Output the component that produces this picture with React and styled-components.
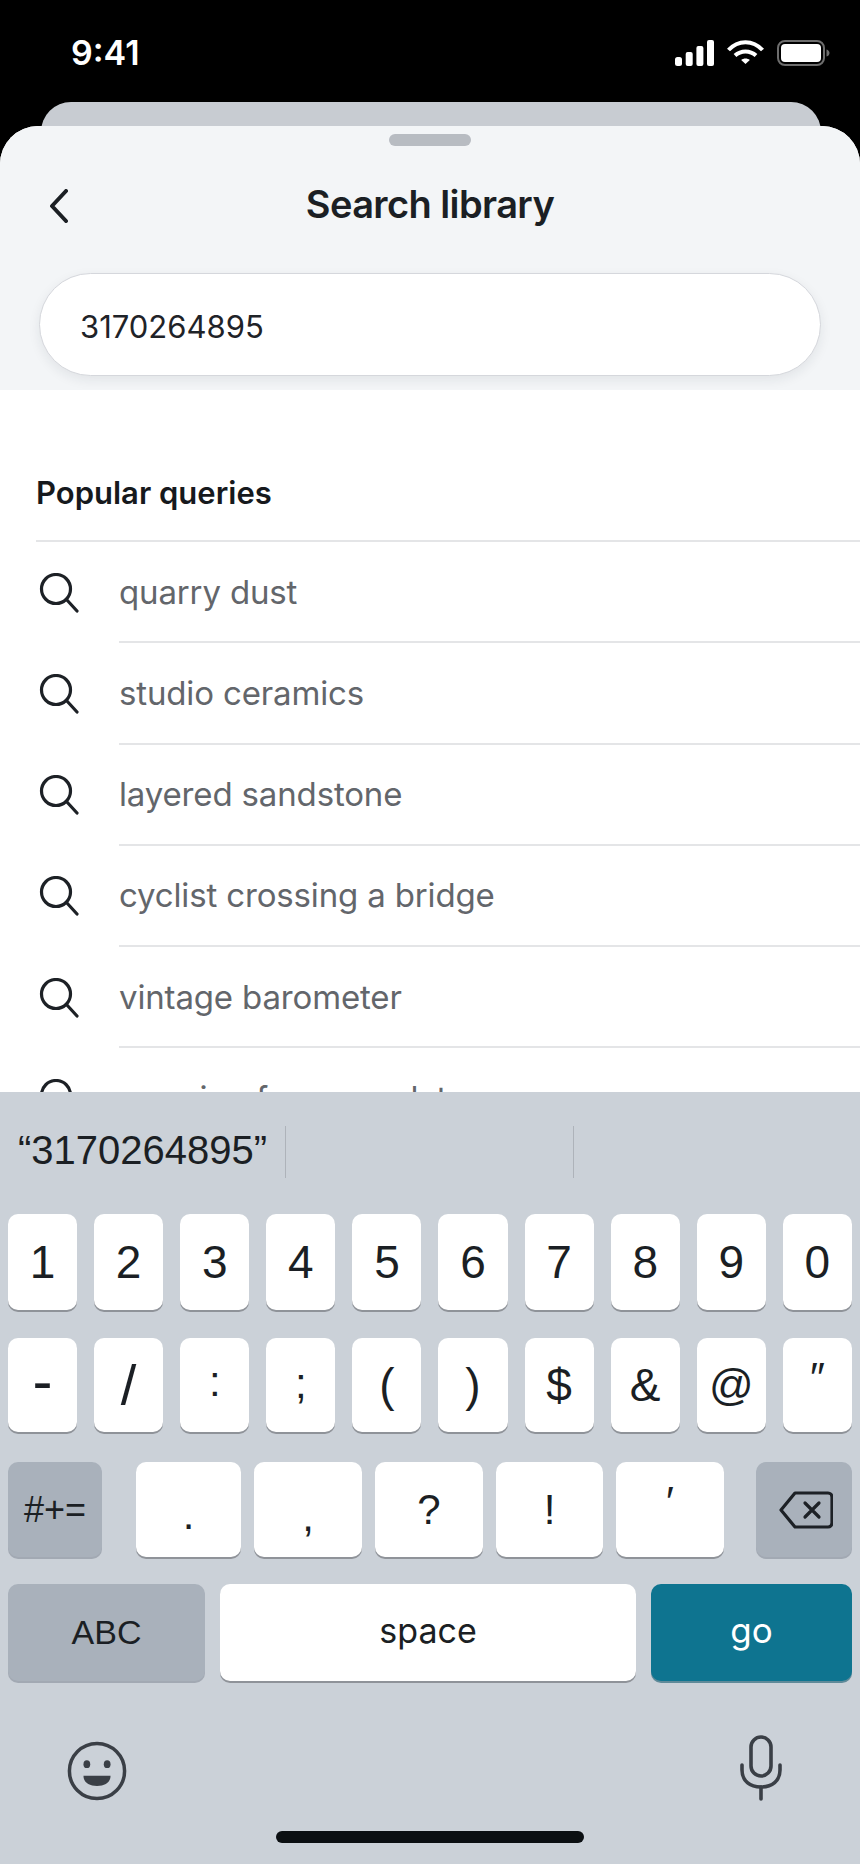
import React from "react";
import styled, { createGlobalStyle } from "styled-components";

/**
 * =Styles
 ******************************/

const GlobalStyle = createGlobalStyle`
	html, body {
		margin: 0;
		padding: 0;
		background: #000;
	}

	* {
		box-sizing: border-box;
	}
`;

const UI_FONT = `Inter, "Liberation Sans", sans-serif`;
const KEY_FONT = `"Liberation Sans", Arial, sans-serif`;

const Screen = styled.div`
	width: 860px;
	height: 1864px;
	display: flex;
	flex-direction: column;
	overflow: hidden;
	background: #000;
	font-family: ${UI_FONT};
`;

const StatusBar = styled.div`
	height: 102px;
	flex: none;
	display: flex;
	justify-content: space-between;
	align-items: flex-start;
	padding: 34px 30px 0 71px;
`;

const Time = styled.span`
	color: #fff;
	font-size: 34px;
	font-weight: 600;
	line-height: 38px;
`;

const StatusIcons = styled.div`
	display: flex;
	align-items: flex-start;
	padding-top: 6px;
	gap: 13px;
`;

const BackCard = styled.div`
	height: 60px;
	flex: none;
	margin: 0 39px -36px 41px;
	background: #c8ccd2;
	border-radius: 30px 30px 0 0;
`;

const Sheet = styled.div`
	position: relative;
	flex: 1;
	min-height: 0;
	display: flex;
	flex-direction: column;
	overflow: hidden;
	background: #fff;
	border-radius: 38px 38px 0 0;
`;

const SheetHeader = styled.header`
	flex: none;
	height: 264px;
	display: flex;
	flex-direction: column;
	background: #f3f5f7;
	padding: 8px 39px 0 39px;
`;

const Handle = styled.div`
	flex: none;
	width: 82px;
	height: 12px;
	margin: 0 auto;
	border-radius: 6px;
	background: #b8bcc2;
`;

const TitleRow = styled.div`
	height: 58px;
	margin-top: 29px;
	display: grid;
	grid-template-columns: 1fr auto 1fr;
	align-items: center;
`;

const BackButton = styled.div`
	display: flex;
	padding: 3px 0 0 10px;
`;

const Title = styled.h1`
	margin: 0;
	color: #1b1f24;
	font-size: 38px;
	font-weight: 600;
	letter-spacing: -0.6px;
`;

const SearchField = styled.div`
	height: 103px;
	margin-top: 40px;
	display: flex;
	align-items: center;
	padding: 4px 40px 0;
	background: #fff;
	border: 1.5px solid #d5d7dc;
	border-radius: 52px;
	box-shadow: 0 4px 12px rgba(30, 40, 50, 0.08);
	color: #1f2328;
	font-size: 31px;
`;

const SectionTitle = styled.h2`
	margin: 0 0 0 36px;
	padding: 83px 0 27px;
	border-bottom: 2px solid #e4e5e7;
	color: #16191d;
	font-size: 31px;
	font-weight: 600;
	line-height: 40px;
`;

const QueryRow = styled.div`
	height: 101.25px;
	flex: none;
	display: flex;
`;

const QueryIcon = styled.div`
	width: 119px;
	flex: none;
	display: flex;
	align-items: center;
	padding-left: 39px;
`;

const QueryText = styled.div`
	flex: 1;
	display: flex;
	align-items: center;
	border-bottom: 2px solid #e4e5e7;
	color: #63666b;
	font-size: 33px;
	letter-spacing: -0.15px;
`;

const Keyboard = styled.section`
	flex: none;
	height: 772px;
	display: flex;
	flex-direction: column;
	background: #cbd1d8;
`;

const Suggestions = styled.div`
	height: 122px;
	flex: none;
	display: flex;
	padding-top: 34px;
	color: #1b1f24;
	font-family: ${KEY_FONT};
	font-size: 40px;
`;

const Suggestion = styled.div`
	width: ${(p) => p.$width}px;
	height: 52px;
	display: flex;
	align-items: center;
	padding: 0 0 3px 18px;
	border-right: 1px solid #aeb3ba;
`;

const KeyRow = styled.div`
	display: flex;
	gap: ${(p) => p.$gap}px;
	height: ${(p) => p.$height}px;
	margin-top: ${(p) => p.$top || 0}px;
	padding: 0 8px;
`;

const Key = styled.div`
	flex: ${(p) => (p.$width ? `0 0 ${p.$width}px` : 1)};
	display: flex;
	align-items: center;
	justify-content: center;
	padding-bottom: ${(p) => p.$lift || 0}px;
	padding-top: ${(p) => p.$drop || 0}px;
	padding-left: ${(p) => p.$nudge || 0}px;
	border-radius: 10px;
	background: ${(p) => p.$bg || "#fff"};
	box-shadow: 0 2px 0 ${(p) => p.$edge || "#8f9399"};
	color: ${(p) => p.$color || "#1b1f24"};
	font-family: ${(p) => (p.$ui ? UI_FONT : KEY_FONT)};
	font-size: ${(p) => p.$size || 46}px;
	line-height: 1;
`;

const KeyGroup = styled.div`
	display: flex;
	gap: 13px;
	margin: 0 32px 0 34px;
`;

const BottomRow = styled.div`
	display: flex;
	justify-content: space-between;
	align-items: flex-end;
	margin-top: 54px;
	padding: 0 78px 0 67px;
`;

const HomeIndicator = styled.div`
	width: 308px;
	height: 12px;
	margin: 30px auto 0;
	border-radius: 6px;
	background: #0b0f12;
`;

/**
 * =Icons
 ******************************/

const SignalIcon = () => (
	<svg width="39" height="26" viewBox="0 0 39 26" fill="#fff">
		<rect x="0" y="17" width="7" height="9" rx="2.5" />
		<rect x="10.700" y="12" width="7" height="14" rx="2" />
		<rect x="21.400" y="6" width="7" height="20" rx="2" />
		<rect x="32" y="0" width="7" height="26" rx="2" />
	</svg>
);

const WifiIcon = () => (
	<svg width="37" height="24" viewBox="0 0 37 24" fill="none" stroke="#fff" strokeWidth="4">
		<path d="M1.500 10C11 -0.500 26 -0.500 35.500 10" />
		<path d="M8 15.500C14 10 23 10 29 15.500" />
		<path d="M14.200 20 18.500 24 22.800 20C20.500 18 16.500 18 14.200 20Z" fill="#fff" stroke="none" />
	</svg>
);

const BatteryIcon = () => (
	<svg width="53" height="26" viewBox="0 0 53 26">
		<rect x="1" y="1" width="46" height="24" rx="7" fill="none" stroke="#6d6d6d" strokeWidth="2" />
		<rect x="4" y="4" width="40" height="18" rx="4" fill="#fff" />
		<path d="M49.500 9.500C51.500 10 52.500 11.500 52.500 13S51.500 16 49.500 16.500Z" fill="#6d6d6d" />
	</svg>
);

const ChevronIcon = () => (
	<svg width="20" height="34" viewBox="0 0 20 34" fill="none" stroke="#1b1f24" strokeWidth="4" strokeLinecap="round" strokeLinejoin="round">
		<path d="M17 2 3 17l14 15" />
	</svg>
);

const SearchIcon = () => (
	<svg width="40" height="40" viewBox="0 0 40 40" fill="none" stroke="#1d2126" strokeWidth="3.200" strokeLinecap="round">
		<circle cx="17" cy="16" r="14.500" />
		<path d="M27.500 26.500 38 38" />
	</svg>
);

const BackspaceIcon = () => (
	<svg width="54" height="38" viewBox="0 0 54 38" fill="none" stroke="#1d2126" strokeWidth="3.200" strokeLinejoin="round" strokeLinecap="round">
		<path d="M16 2h33a4 4 0 0 1 4 4v26a4 4 0 0 1-4 4H16L2 19Z" />
		<path d="M26 12l14 14M40 12 26 26" />
	</svg>
);

const EmojiIcon = () => (
	<svg width="60" height="60" viewBox="0 0 62 62" fill="none" stroke="#3a3f46" strokeWidth="3.600">
		<circle cx="31" cy="31" r="28.500" />
		<ellipse cx="20.500" cy="24" rx="3.500" ry="4" fill="#3a3f46" stroke="none" />
		<ellipse cx="41.500" cy="24" rx="3.500" ry="4" fill="#3a3f46" stroke="none" />
		<path d="M17 36h28c0 7-6 10.500-14 10.500S17 43 17 36Z" fill="#3a3f46" stroke="none" />
	</svg>
);

const MicIcon = () => (
	<svg width="42" height="66" viewBox="0 0 42 66" fill="none" stroke="#3a3f46" strokeWidth="3.600" strokeLinecap="round">
		<rect x="11" y="2" width="20" height="39" rx="10" />
		<path d="M2 30v5c0 11 8 17 19 17s19-6 19-17v-5" />
		<path d="M21 52v12" />
	</svg>
);

/**
 * =Data
 ******************************/

const QUERIES = [
	"quarry dust",
	"studio ceramics",
	"layered sandstone",
	"cyclist crossing a bridge",
	"vintage barometer",
	"morning fog over slate"
];

const DIGITS = ["1", "2", "3", "4", "5", "6", "7", "8", "9", "0"];

const SYMBOLS = [
	{ label: "-", size: 60, lift: 8 },
	{ label: "/", size: 56 },
	{ label: ":", size: 42, lift: 6 },
	{ label: ";", size: 42, lift: 2 },
	{ label: "(" },
	{ label: ")" },
	{ label: "$" },
	{ label: "&" },
	{ label: "@", size: 44 },
	{ label: "″", size: 42, lift: 14 }
];

const PUNCTUATION = [
	{ label: ".", width: 105, drop: 10 },
	{ label: ",", width: 108, drop: 14 },
	{ label: "?", width: 108 },
	{ label: "!", width: 107 },
	{ label: "′", width: 108, lift: 16 }
];

/**
 * =App
 ******************************/

export default function App() {
	return (
		<Screen>
			<GlobalStyle />

			<StatusBar>
				<Time>9:41</Time>
				<StatusIcons>
					<SignalIcon />
					<WifiIcon />
					<BatteryIcon />
				</StatusIcons>
			</StatusBar>

			<BackCard />

			<Sheet>
				<SheetHeader>
					<Handle />
					<TitleRow>
						<BackButton>
							<ChevronIcon />
						</BackButton>
						<Title>Search library</Title>
					</TitleRow>
					<SearchField>3170264895</SearchField>
				</SheetHeader>

				<SectionTitle>Popular queries</SectionTitle>

				{QUERIES.map((query) => (
					<QueryRow key={query}>
						<QueryIcon>
							<SearchIcon />
						</QueryIcon>
						<QueryText>{query}</QueryText>
					</QueryRow>
				))}
			</Sheet>

			<Keyboard>
				<Suggestions>
					<Suggestion $width={286}>“3170264895”</Suggestion>
					<Suggestion $width={288} />
				</Suggestions>

				<KeyRow $height={96} $gap={17}>
					{DIGITS.map((digit) => (
						<Key key={digit}>{digit}</Key>
					))}
				</KeyRow>

				<KeyRow $height={94} $top={28} $gap={17}>
					{SYMBOLS.map((key) => (
						<Key key={key.label} $size={key.size} $lift={key.lift}>
							{key.label}
						</Key>
					))}
				</KeyRow>

				<KeyRow $height={95} $top={30} $gap={0}>
					<Key $width={94} $bg="#a9b1bb" $edge="#a2a9b3" $size={36}>
						#+=
					</Key>
					<KeyGroup>
						{PUNCTUATION.map((key) => (
							<Key
								key={key.label}
								$width={key.width}
								$size={42}
								$lift={key.lift}
								$drop={key.drop}
							>
								{key.label}
							</Key>
						))}
					</KeyGroup>
					<Key $width={96} $bg="#a9b1bb" $edge="#a2a9b3" $nudge={3}>
						<BackspaceIcon />
					</Key>
				</KeyRow>

				<KeyRow $height={97} $top={27} $gap={15}>
					<Key $width={197} $bg="#a9b1bb" $edge="#a2a9b3" $size={34} $lift={2}>
						ABC
					</Key>
					<Key $width={416} $ui $size={34} $lift={4}>
						space
					</Key>
					<Key $width={201} $bg="#0e7490" $edge="#5f8a99" $color="#fff" $ui $size={35} $lift={5}>
						go
					</Key>
				</KeyRow>

				<BottomRow>
					<EmojiIcon />
					<MicIcon />
				</BottomRow>

				<HomeIndicator />
			</Keyboard>
		</Screen>
	);
}
